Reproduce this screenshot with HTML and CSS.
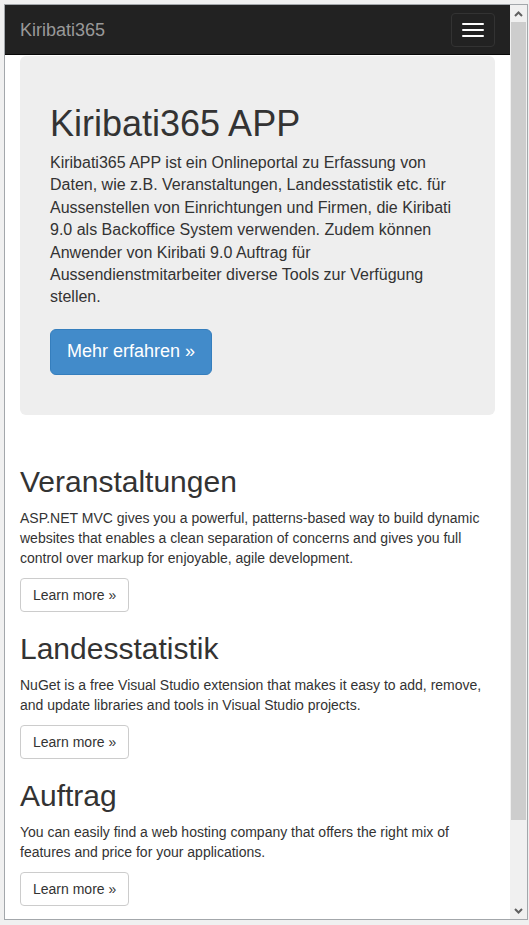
FILE: index.html
```html
<!DOCTYPE html>
<html lang="de">
<head>
<meta charset="utf-8">
<title>Kiribati365 APP</title>
<link rel="stylesheet" href="styles.css">
</head>
<body>
<div class="window">
  <div class="viewport">
    <nav class="navbar">
      <a class="brand" href="#">Kiribati365</a>
      <button class="toggle" type="button" aria-label="Navigation">
        <span class="bar"></span><span class="bar"></span><span class="bar"></span>
      </button>
    </nav>
    <div class="container">
      <div class="jumbotron">
        <h1>Kiribati365 APP</h1>
        <p class="lead">Kiribati365 APP ist ein Onlineportal zu Erfassung von Daten, wie z.B. Veranstaltungen, Landesstatistik etc. für Aussenstellen von Einrichtungen und Firmen, die Kiribati 9.0 als Backoffice System verwenden. Zudem können Anwender von Kiribati 9.0 Auftrag für Aussendienstmitarbeiter diverse Tools zur Verfügung stellen.</p>
        <p class="cta"><a class="btn btn-primary btn-lg" href="#">Mehr erfahren »</a></p>
      </div>
      <div class="row">
        <div class="col">
          <h2>Veranstaltungen</h2>
          <p>ASP.NET MVC gives you a powerful, patterns-based way to build dynamic websites that enables a clean separation of concerns and gives you full control over markup for enjoyable, agile development.</p>
          <p><a class="btn btn-default" href="#">Learn more »</a></p>
        </div>
        <div class="col">
          <h2>Landesstatistik</h2>
          <p>NuGet is a free Visual Studio extension that makes it easy to add, remove, and update libraries and tools in Visual Studio projects.</p>
          <p><a class="btn btn-default" href="#">Learn more »</a></p>
        </div>
        <div class="col">
          <h2>Auftrag</h2>
          <p>You can easily find a web hosting company that offers the right mix of features and price for your applications.</p>
          <p><a class="btn btn-default" href="#">Learn more »</a></p>
        </div>
      </div>
    </div>
  </div>
  <div class="scrollbar">
    <div class="arrow">
      <svg width="9" height="6" viewBox="0 0 9 6"><polyline points="1,5 4.5,1.5 8,5" fill="none" stroke="#606060" stroke-width="2"/></svg>
    </div>
    <div class="track"><div class="thumb"></div></div>
    <div class="arrow">
      <svg width="9" height="6" viewBox="0 0 9 6"><polyline points="1,1 4.5,4.5 8,1" fill="none" stroke="#606060" stroke-width="2"/></svg>
    </div>
  </div>
</div>
</body>
</html>
```

FILE: styles.css
```css
* { box-sizing: border-box; }

html, body {
  margin: 0;
  height: 100%;
}

body {
  background: #f0f0f0;
  padding: 4px 0 0 4px;
  font-family: "Liberation Sans", Arial, sans-serif;
  font-size: 14px;
  line-height: 1.428571429;
  color: #333;
}

.window {
  display: flex;
  width: 524px;
  height: 916px;
  border: 1px solid #a3a7ab;
  background: #fff;
}

.viewport {
  width: 505px;
  height: 914px;
  overflow: hidden;
  background: #fff;
}

/* navbar */
.navbar {
  display: flex;
  justify-content: space-between;
  align-items: flex-start;
  height: 50px;
  background: #222;
  border-bottom: 1px solid #080808;
}

.brand {
  padding: 15px;
  font-size: 18px;
  line-height: 20px;
  color: #999;
  text-decoration: none;
}

.toggle {
  display: flex;
  flex-direction: column;
  gap: 4px;
  margin: 8px 15px 0 0;
  padding: 9px 10px;
  border: 1px solid #333;
  border-radius: 4px;
  background: transparent;
}

.bar {
  display: block;
  width: 22px;
  height: 2px;
  border-radius: 1px;
  background: #fff;
}

/* content */
.container {
  padding: 1px 15px 0;
}

.jumbotron {
  padding: 30px;
  margin-bottom: 30px;
  background: #eee;
  border-radius: 6px;
  font-size: 21px;
  line-height: 2.1428571435;
}

.jumbotron h1 {
  margin: 20px 0 10px;
  font-size: 36px;
  font-weight: 500;
  line-height: 1;
}

.jumbotron p {
  line-height: 1.4;
}

.jumbotron .lead {
  margin: 0 0 20px;
  font-size: 16px;
  line-height: 1.4;
}

.jumbotron .cta {
  margin: 0 0 10px;
}

.row {
  margin: 0 -15px;
}

.row::before {
  content: "";
  display: table;
}

.col {
  padding: 0 15px;
}

h2 {
  margin: 20px 0 10px;
  font-size: 30px;
  font-weight: 500;
  line-height: 1.1;
}

p {
  margin: 0 0 10px;
}

.btn {
  display: inline-block;
  padding: 6px 12px;
  font-size: 14px;
  line-height: 1.428571429;
  border: 1px solid transparent;
  border-radius: 4px;
  text-decoration: none;
  white-space: nowrap;
  vertical-align: middle;
}

.btn-default {
  color: #333;
  background: #fff;
  border-color: #ccc;
}

.btn-primary {
  color: #fff;
  background: #428bca;
  border-color: #357ebd;
}

.btn-lg {
  padding: 10px 16px;
  font-size: 18px;
  line-height: 1.33;
  border-radius: 6px;
}

/* scrollbar */
.scrollbar {
  display: flex;
  flex-direction: column;
  width: 17px;
  height: 914px;
  background: #f0f0f0;
}

.arrow {
  display: flex;
  align-items: center;
  justify-content: center;
  height: 17px;
  flex: none;
}

.track {
  flex: 1;
  padding: 0 1px;
}

.thumb {
  height: 798px;
  background: #cdcdcd;
}
```
